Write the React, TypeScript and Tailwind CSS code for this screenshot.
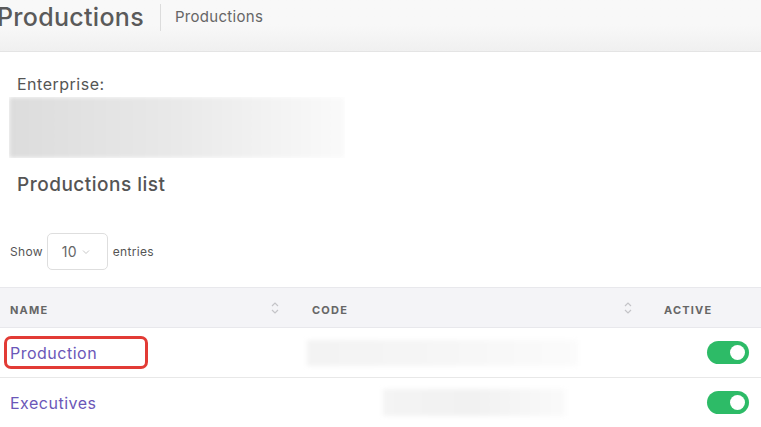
const font = { fontFamily: "Inter, 'Noto Sans', sans-serif" };

function SortIcon() {
  return (
    <svg width="8" height="14" viewBox="0 0 8 14" fill="none" stroke="#c4c4c8" strokeWidth="1.2">
      <path d="M1 5 L4 2 L7 5" />
      <path d="M1 9 L4 12 L7 9" />
    </svg>
  );
}

function Toggle() {
  return (
    <div className="flex h-[23px] w-[42px] items-center justify-end rounded-full bg-[#2dbb67] pr-[4px]">
      <div className="h-[15px] w-[15px] rounded-full bg-white" />
    </div>
  );
}

export default function App() {
  return (
    <div className="h-[427px] w-[761px] overflow-hidden bg-white text-[#555]" style={font}>
      <div className="flex h-[52px] items-start border-b border-[#e4e4e4] bg-gradient-to-b from-[#f8f8f8] via-[#f8f8f8] to-[#f0f0f0]">
        <h1 className="-ml-[3px] mt-[1px] text-[25px] font-medium leading-[32px] tracking-[0.3px] text-[#5a5a5a]">
          Productions
        </h1>
        <div className="ml-[16px] mt-[4px] h-[27px] w-px bg-[#dcdcdc]" />
        <span className="ml-[14px] mt-[8px] text-[15px] leading-[18px] tracking-[0.3px] text-[#666]">Productions</span>
      </div>

      <div className="px-[17px] pt-[22px]">
        <p className="text-[16px] leading-[20px] tracking-[0.5px] text-[#555]">Enterprise:</p>
      </div>
      <div className="ml-[9px] mt-[3px] h-[61px] w-[336px] overflow-hidden">
        <div className="h-full w-full bg-gradient-to-r from-[#dcdcdc] via-[#e9e9e9] to-[#fafafa] blur-[2px]" />
      </div>
      <p className="ml-[17px] mt-[16px] text-[19px] font-medium leading-[22px] tracking-[0.5px] text-[#555]">
        Productions list
      </p>

      <div className="ml-[10px] mt-[37px] flex items-center text-[12px] tracking-[0.3px] text-[#555]">
        <span>Show</span>
        <div className="ml-[4px] flex h-[37px] w-[61px] items-center rounded-[5px] border border-[#dedede] pl-[14px]">
          <span className="text-[14px] text-[#666]">10</span>
          <svg className="ml-[5px]" width="8" height="6" viewBox="0 0 8 6" fill="none" stroke="#c8c8c8" strokeWidth="1">
            <path d="M1 1.5 L4 4.5 L7 1.5" />
          </svg>
        </div>
        <span className="ml-[5px]">entries</span>
      </div>

      <table className="mt-[17px] w-[761px] table-fixed border-collapse">
        <colgroup>
          <col className="w-[302px]" />
          <col className="w-[352px]" />
          <col className="w-[107px]" />
        </colgroup>
        <thead>
          <tr className="h-[40px] border-y border-[#e8e8ec] bg-[#f4f4f7] text-left text-[11px] font-semibold tracking-[1.2px] text-[#666]">
            <th className="pl-[10px] pr-[23px] pt-[6px]">
              <div className="flex items-center justify-between">
                <span>NAME</span>
                <div className="-mt-[6px]">
                  <SortIcon />
                </div>
              </div>
            </th>
            <th className="pl-[10px] pr-[22px] pt-[6px]">
              <div className="flex items-center justify-between">
                <span>CODE</span>
                <div className="-mt-[6px]">
                  <SortIcon />
                </div>
              </div>
            </th>
            <th className="pl-[10px] pt-[6px]">ACTIVE</th>
          </tr>
        </thead>
        <tbody className="text-[16px] tracking-[0.5px] text-[#6b57b8]">
          <tr className="h-[50px] border-b border-[#e8e8e8]">
            <td className="pl-[4px]">
              <div className="flex h-[33px] w-[144px] items-center rounded-[7px] border-[3px] border-[#e23b35] pl-[3px]">
                Production
              </div>
            </td>
            <td className="pl-[5px]">
              <div className="h-[26px] w-[271px] bg-gradient-to-r from-[#f3f3f3] via-[#f6f6f6] to-[#fbfbfb] blur-[2px]" />
            </td>
            <td className="pl-[53px]">
              <Toggle />
            </td>
          </tr>
          <tr className="h-[50px]">
            <td className="pl-[10px]">Executives</td>
            <td className="pl-[81px]">
              <div className="h-[27px] w-[182px] bg-gradient-to-r from-[#f4f4f4] via-[#f1f1f1] to-[#fafafa] blur-[2px]" />
            </td>
            <td className="pl-[53px]">
              <Toggle />
            </td>
          </tr>
        </tbody>
      </table>
    </div>
  );
}
